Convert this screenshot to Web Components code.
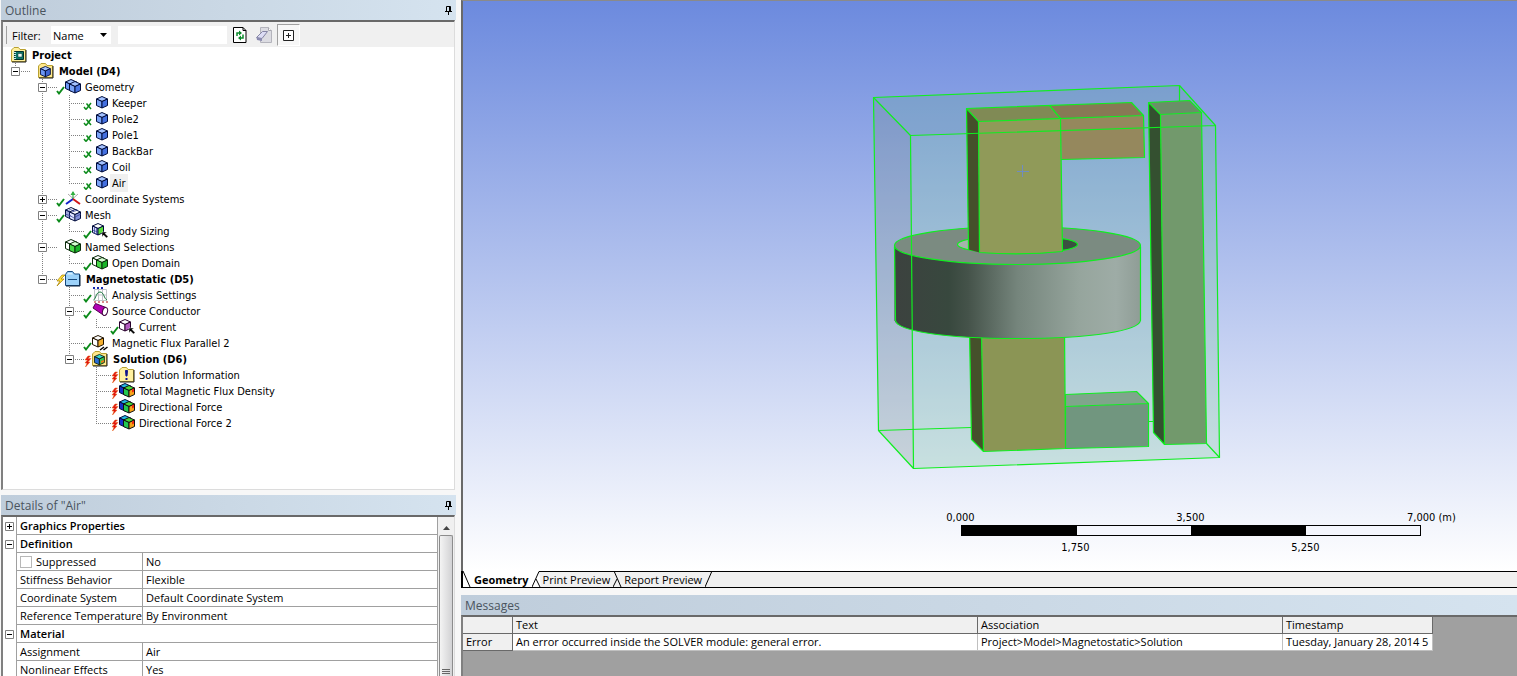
<!DOCTYPE html>
<html lang="en">
<head>
<meta charset="utf-8">
<title>Mechanical</title>
<style>
    :root {
        --tree-font: 11px/16px "DejaVu Sans Condensed", "DejaVu Sans", sans-serif;
        --ui-font: 11px/17px "Open Sans", "Noto Sans", sans-serif;
        --dark: #696969;
        --line: #a0a0a0;
        --face: #f0f0f0;
    }
    html, body {
        height: 100%;
        margin: 0;
    }
    body {
        background: #f7f7f7;
        color: #000;
        font: var(--ui-font);
        overflow: hidden;
    }
</style>
</head>
<body>
<mech-workspace>
    <dock-panel slot="outline" heading="Outline" pin>
        <outline-filter></outline-filter>
        <outline-tree>
            <tree-item root bold icon="project" label="Project">
                <tree-item bold icon="model" label="Model (D4)" toggle="minus" last>
                    <tree-item icon="geometry" label="Geometry" toggle="minus" status="check">
                        <tree-item icon="part" label="Keeper" status="hidden"></tree-item>
                        <tree-item icon="part" label="Pole2" status="hidden"></tree-item>
                        <tree-item icon="part" label="Pole1" status="hidden"></tree-item>
                        <tree-item icon="part" label="BackBar" status="hidden"></tree-item>
                        <tree-item icon="part" label="Coil" status="hidden"></tree-item>
                        <tree-item icon="part" label="Air" status="hidden" selected last></tree-item>
                    </tree-item>
                    <tree-item icon="axes" label="Coordinate Systems" toggle="plus" status="check"></tree-item>
                    <tree-item icon="mesh" label="Mesh" toggle="minus" status="check">
                        <tree-item icon="sizing" label="Body Sizing" status="check" last></tree-item>
                    </tree-item>
                    <tree-item icon="named" label="Named Selections" toggle="minus">
                        <tree-item icon="named" label="Open Domain" status="check" last></tree-item>
                    </tree-item>
                    <tree-item bold icon="analysis" label="Magnetostatic (D5)" toggle="minus" status="bolt" last>
                        <tree-item icon="settings" label="Analysis Settings" status="check"></tree-item>
                        <tree-item icon="conductor" label="Source Conductor" toggle="minus" status="check">
                            <tree-item icon="current" label="Current" status="check" last></tree-item>
                        </tree-item>
                        <tree-item icon="flux" label="Magnetic Flux Parallel 2" status="check"></tree-item>
                        <tree-item bold icon="solution" label="Solution (D6)" toggle="minus" status="failed" last>
                            <tree-item icon="info" label="Solution Information" status="failed"></tree-item>
                            <tree-item icon="result" label="Total Magnetic Flux Density" status="failed"></tree-item>
                            <tree-item icon="result" label="Directional Force" status="failed"></tree-item>
                            <tree-item icon="result" label="Directional Force 2" status="failed" last></tree-item>
                        </tree-item>
                    </tree-item>
                </tree-item>
            </tree-item>
        </outline-tree>
    </dock-panel>
    <dock-panel slot="details" heading='Details of "Air"' pin>
        <details-grid></details-grid>
    </dock-panel>
    <geometry-view slot="view">
        <scale-ruler></scale-ruler>
    </geometry-view>
    <view-tabs slot="tabs"></view-tabs>
    <dock-panel slot="messages" heading="Messages">
        <message-list></message-list>
    </dock-panel>
</mech-workspace>

<script>
const G = '#0b8a1a';

// isometric cube: top, left and right faces
const cube = (x, y, top, left, right, stroke = '#000c3c', scale = 1) => `
    <g transform="translate(${x} ${y}) scale(${scale})" stroke="${stroke}" stroke-width="1" stroke-linejoin="round">
        <path fill="${top}" d="M.5 3 6 .5 11.5 3 6 5.5z"/>
        <path fill="${left}" d="M.5 3 6 5.5V12L.5 9.5z"/>
        <path fill="${right}" d="M11.5 3 6 5.5V12l5.5-2.5z"/>
    </g>`;

const folder = (fill, edge) => `
    <path d="M.5 14.5V3L3 .5h4.5l1.5 2h5.5v12z" fill="${fill}" stroke="${edge}"/>
    <path d="M1 15h14V3" fill="none" stroke="#1a1a1a"/>`;

const ICONS = {
    project: folder('#ffef9c', '#b8a030') + `
        <path d="M3.5 4.5h9v8h-9z" fill="#0d7468" stroke="#00302c"/>
        <path d="M7 6.5h4V10H7z" fill="#e8f6f2" stroke="#00302c" stroke-width=".5"/>
        <path d="M2 5.5h3M2 7.5h3M2 9.5h3M2 11.5h3" stroke="#cfe8e4"/>`,
    model: folder('#ffe88c', '#b8a030') + cube(2, 3, '#a4c2ff', '#6b96f4', '#3f66d4', '#000c3c', .9),
    geometry: cube(0, 0, '#a4c2ff', '#6b96f4', '#4a76e4') + cube(4, 2, '#a4c2ff', '#7ba4f8', '#4a76e4'),
    part: cube(4, 1, '#a4c2ff', '#7ba4f8', '#4470e0'),
    axes: `
        <path d="M3 3l10 9M13 3 3 12" stroke="#aaa"/>
        <path d="M8 9V1" stroke="#10a020"/><path d="M5.5 4 8 0l2.5 4z" fill="#30b040"/>
        <path d="M8 8l-7 5" stroke="#1020c8" stroke-width="2"/><path d="M8 8l7 5" stroke="#d01818" stroke-width="2"/>`,
    mesh: cube(0, 0, '#fff', '#dfe4ff', '#c8d0ff') + cube(4, 2, '#fff', '#dfe4ff', '#b4c0ff') + `
        <path d="M2 2v8M4 3v8M0 7l6 2M12 7v6M14 6v6M10 10l6-3M4 8l5 3M7 5l6-2M4 2l5 2" stroke="#2c3a94" stroke-width=".7"/>`,
    sizing: cube(0, 0, '#fff', '#d8dcf8', '#5ade3c') + `
        <path d="M2.5 4v7M4.5 5v7M.5 7l5 2" stroke="#2c3a94" stroke-width=".7"/>
        <path d="M10 9h5l-2 1.5 3 3-1.5 1.5-3-3L10 14z" fill="#000" stroke="#fff" stroke-width=".4"/>`,
    named: cube(0, 0, '#fff', '#fff', '#e8f4e8', '#0a2a0a') + cube(4, 2, '#d4ffd0', '#48dc48', '#18b428', '#0a2a0a'),
    analysis: `
        <path d="M.5 14.5v-11l2-3h5l2 2.5h5v11.5z" fill="#9cd2fa" stroke="#16497e"/>
        <path d="M2 3.5 3 2h4l1 1.5z" fill="#d8f0ff"/><path d="M3 8.5h9" stroke="#16497e"/>
        <path d="M1 15h14V4" fill="none" stroke="#0a2038"/>`,
    settings: `
        <path d="M2.5 2.5h12v11h-12zM6.5 2.5v11M10.5 2.5v11M2.5 8h12" fill="none" stroke="#c0c4c8"/>
        <path d="M1 1h2M5 1h2M9 1h2" stroke="#1428b0" stroke-width="2"/>
        <path d="M2 15h2M6 15h2M10 15h2M14 15h2" stroke="#b01818"/>
        <path d="M1.5 13C4 12 4 5 8 5s4 7 7 8" fill="none" stroke="#18783c"/>`,
    conductor: `
        <path d="M1 5 3.5.5 14 4.5 12 12.5z" fill="#b400b4" stroke="#500050"/>
        <ellipse cx="13" cy="8.5" rx="2.5" ry="4" fill="#fff" stroke="#400040" transform="rotate(15 13 8.5)"/>`,
    current: cube(0, 0, '#fff', '#fff', '#b45cc0', '#28002c') + `
        <path d="M10 9h5l-2 1.5 3 3-1.5 1.5-3-3L10 14z" fill="#000" stroke="#fff" stroke-width=".4"/>`,
    flux: cube(0, 0, '#fff', '#fff', '#f4b030', '#221400') + `
        <path d="M8 15l4-3M11.5 15l4-3" stroke="#000" stroke-width="1.5"/>`,
    solution: folder('#ffe88c', '#b8a030') + cube(2, 3, '#38d8d0', '#2a6ed8', '#38c850', '#102010', .9) + `
        <path d="M9 10l3-1v2l-3 1z" fill="#f07818"/>`,
    info: folder('#fff0a0', '#b8a030') + `
        <path d="M6.5 3.5h2L8 9H7z" fill="#10148c" stroke="#10148c"/><path d="M7.5 11v2" stroke="#10148c" stroke-width="2"/>`,
    result: cube(0, 0, '#22b8e0', '#1530c8', '#18b8b0') + cube(4, 2, '#48d838', '#22c850', '#f8a418', '#101010') + `
        <path d="M13 6.5l2-1v3l-2 1z" fill="#f02810"/>`
};

const STATUS = {
    check: `<path d="M1 12l2 2.5L8 8" fill="none" stroke="${G}" stroke-width="2"/>`,
    hidden: `<path d="M1 12l2 2.5M3 14.5 8 8M3.5 8.5 8 14" fill="none" stroke="${G}" stroke-width="1.5"/>`,
    bolt: `<path d="M6 4 1 10h3l-3 5 7-7H5l4-4z" fill="#ffe23c" stroke="#a88000" stroke-width=".7"/>`,
    failed: `<path d="M5 5 2 9h2.5L2 12h2l-1.5 4L7 11H5l3-3.5H5L7.5 5z" fill="#e01010" stroke="#e86010" stroke-width=".5"/>`
};

const PIN = `<svg width="7" height="9" viewBox="0 0 7 9"><path d="M1.5 5V.5h4V5M0 5.5h7M3.5 6v3M4.5 1v4" fill="none" stroke="#000"/></svg>`;

class MechWorkspace extends HTMLElement {
    constructor() {
        super();
        this.attachShadow({ mode: "open" });
    }

    static get styles() {
        return /* css */`
            :host {
                display: grid;
                grid-template-columns: 456px minmax(0, 1fr);
                column-gap: 5px;
                height: 100vh;
            }

            .side {
                display: grid;
                grid-template-rows: minmax(0, 1fr) 181px;
                row-gap: 5px;
                min-height: 0;
                padding-left: 1px;
            }

            .main {
                display: grid;
                grid-template-rows: minmax(0, 1fr) auto 81px;
                min-height: 0;
            }

            ::slotted([slot="tabs"]) {
                margin-bottom: 7px;
            }
        `;
    }

    connectedCallback() {
        this.render();
    }

    render() {
        this.shadowRoot.innerHTML = /* html */`
        <style>${MechWorkspace.styles}</style>
        <div class="side">
            <slot name="outline"></slot>
            <slot name="details"></slot>
        </div>
        <div class="main">
            <slot name="view"></slot>
            <slot name="tabs"></slot>
            <slot name="messages"></slot>
        </div>`;
    }
}

class DockPanel extends HTMLElement {
    constructor() {
        super();
        this.attachShadow({ mode: "open" });
    }

    static get styles() {
        return /* css */`
            :host {
                display: flex;
                flex-direction: column;
                min-height: 0;
                overflow: hidden;
            }

            header {
                display: flex;
                align-items: center;
                justify-content: space-between;
                flex: none;
                height: 20px;
                padding: 0 4px;
                background: linear-gradient(90deg, #bfcddb, #d5e3ef);
                color: #4a545e;
                font-size: 12px;
            }

            h2 {
                margin: 0;
                font: inherit;
            }

            button {
                display: flex;
                padding: 0;
                border: 0;
                background: none;
            }

            .body {
                display: flex;
                flex-direction: column;
                flex: 1;
                min-height: 0;
                overflow: hidden;
                border-top: 2px solid var(--dark);
                border-left: 2px solid #808080;
                background: #fff;
            }

            :host([pin]) .body {
                margin-right: 1px;
                border-right: 1px solid #dcdcdc;
            }

            :host([slot="outline"]) .body {
                border-bottom: 1px solid #dcdcdc;
            }

            :host([slot="messages"]) .body {
                background: #a0a0a0;
            }
        `;
    }

    connectedCallback() {
        this.render();
    }

    render() {
        const pin = this.hasAttribute('pin') ? `<button aria-label="Auto hide">${PIN}</button>` : '';
        this.shadowRoot.innerHTML = /* html */`
        <style>${DockPanel.styles}</style>
        <header><h2></h2>${pin}</header>
        <div class="body"><slot></slot></div>`;
        this.shadowRoot.querySelector('h2').textContent = this.getAttribute('heading');
    }
}

class OutlineFilter extends HTMLElement {
    constructor() {
        super();
        this.attachShadow({ mode: "open" });
    }

    static get styles() {
        return /* css */`
            :host {
                display: flex;
                align-items: center;
                flex: none;
                box-sizing: border-box;
                height: 25px;
                padding: 1px 0 0 2px;
                background: var(--face);
            }

            .grip {
                width: 1px;
                height: 18px;
                margin-right: 5px;
                border-right: 1px solid var(--line);
            }

            label {
                width: 39px;
            }

            label, select, input {
                font: var(--ui-font);
            }

            .combo {
                display: grid;
                align-items: center;
                width: 60px;
                margin-right: 7px;
            }

            .combo > * {
                grid-area: 1 / 1;
            }

            .combo svg {
                justify-self: end;
                margin-right: 4px;
                pointer-events: none;
            }

            select, input {
                box-sizing: border-box;
                width: 100%;
                height: 18px;
                padding: 0 2px;
                border: 0;
                border-radius: 0;
                background: #fff;
                color: #000;
                appearance: none;
            }

            input {
                width: 109px;
                margin-right: 5px;
            }

            button {
                display: flex;
                align-items: center;
                justify-content: center;
                width: 16px;
                height: 18px;
                margin-right: 8px;
                padding: 0;
                border: 0;
                background: none;
            }

            button.pressed {
                box-sizing: border-box;
                width: 23px;
                height: 22px;
                margin: 0 0 0 -3px;
                border: 1px solid;
                border-color: var(--line) #fff #fff var(--line);
                background: #f7f7f7;
            }
        `;
    }

    connectedCallback() {
        this.render();
    }

    render() {
        this.shadowRoot.innerHTML = /* html */`
        <style>${OutlineFilter.styles}</style>
        <span class="grip"></span>
        <label for="by">Filter:</label>
        <div class="combo">
            <select id="by"><option>Name</option></select>
            <svg width="7" height="4" viewBox="0 0 7 4"><path d="M0 0h7L3.5 4z"/></svg>
        </div>
        <input type="text" aria-label="Filter text">
        <button aria-label="Refresh">
            <svg width="14" height="16" viewBox="0 0 14 16">
                <path d="M.5.5H10l3 3v12H.5z" fill="#fff" stroke="#000"/>
                <path d="M10 .5v3h3" fill="none" stroke="#000"/>
                <path d="M4 9V6h3M10 7.5V11H7" fill="none" stroke="#0a8a2a" stroke-width="1.5"/>
                <path d="M6 3.5 9 6 6 8.5zM8 8.5 5 11l3 2.5z" fill="#0a8a2a"/>
            </svg>
        </button>
        <button aria-label="Clear">
            <svg width="16" height="16" viewBox="0 0 16 16">
                <path d="M4.5.5h8l3 3v12h-11z" fill="#dcdce2" stroke="#b4b4bc"/>
                <path d="M12.5.5v3h3" fill="#fff" stroke="#a8a8b0"/>
                <path d="M.5 10.5l6-6h5l-5.5 7z" fill="#dcdcf4" stroke="#8484a4"/>
                <path d="M.5 10.5 6 11.5V14L1 13z" fill="#8a8ab0"/>
            </svg>
        </button>
        <button class="pressed" aria-label="Expand all">
            <svg width="11" height="11" viewBox="0 0 11 11"><path d="M.5.5h10v10H.5zM3 5.5h5M5.5 3v5" fill="#fff" stroke="#222"/></svg>
        </button>`;
    }
}

class OutlineTree extends HTMLElement {
    constructor() {
        super();
        this.attachShadow({ mode: "open" });
    }

    connectedCallback() {
        this.shadowRoot.innerHTML = /* html */`
        <style>
            :host {
                display: block;
                flex: 1;
                min-height: 0;
                padding-left: 8px;
                font: var(--tree-font);
            }
        </style>
        <slot></slot>`;
    }
}

class TreeItem extends HTMLElement {
    constructor() {
        super();
        this.attachShadow({ mode: "open" });
    }

    static get styles() {
        return /* css */`
            /* vertical guide runs down the host, behind the toggle */
            :host {
                display: block;
                background: repeating-linear-gradient(#808080 0 1px, transparent 1px 2px) 4px 0 / 1px 100% no-repeat;
                font-weight: normal;
            }

            :host([last]) {
                background-size: 1px 9px;
            }

            :host([root]) {
                background: none;
            }

            .row {
                display: flex;
                align-items: center;
                height: 16px;
            }

            .guide {
                display: flex;
                align-items: center;
                justify-content: space-between;
                width: 27px;
                height: 16px;
                background: repeating-linear-gradient(90deg, #808080 0 1px, transparent 1px 2px) 4px 8px / 15px 1px no-repeat;
            }

            .status {
                margin-left: auto;
            }

            svg {
                display: block;
                flex: none;
                overflow: visible;
            }

            .label {
                margin-left: 2px;
                padding: 2px 2px 0;
                line-height: 16px;
                white-space: nowrap;
            }

            :host([bold]) .label {
                padding-left: 3px;
                font-weight: bold;
            }

            :host([selected]) .label {
                background: var(--face);
            }

            .children {
                margin-left: 27px;
            }

            :host([root]) .children {
                margin-left: 0;
            }
        `;
    }

    connectedCallback() {
        this.render();
    }

    toggle() {
        const kind = this.getAttribute('toggle');
        if (!kind) return '';
        const bar = kind === 'plus' ? 'M2 4.5h5M4.5 2v5' : 'M2 4.5h5';
        return `<svg width="9" height="9" viewBox="0 0 9 9">
            <path d="M.5.5h8v8h-8z" fill="#fff" stroke="#808080"/><path d="${bar}" stroke="#000"/></svg>`;
    }

    status() {
        const kind = this.getAttribute('status');
        if (!kind) return '';
        return `<svg class="status" width="9" height="16" viewBox="0 0 9 16">${STATUS[kind]}</svg>`;
    }

    render() {
        const guide = this.hasAttribute('root') ? '' : `<span class="guide">${this.toggle()}${this.status()}</span>`;
        this.shadowRoot.innerHTML = /* html */`
        <style>${TreeItem.styles}</style>
        <div class="row">
            ${guide}
            <svg width="16" height="16" viewBox="0 0 16 16">${ICONS[this.getAttribute('icon')]}</svg>
            <span class="label">${this.getAttribute('label')}</span>
        </div>
        <div class="children"><slot></slot></div>`;
    }
}

class DetailsGrid extends HTMLElement {
    constructor() {
        super();
        this.attachShadow({ mode: "open" });
        this.groups = [
            ['plus', 'Graphics Properties', []],
            ['minus', 'Definition', [
                ['Suppressed', 'No', true],
                ['Stiffness Behavior', 'Flexible'],
                ['Coordinate System', 'Default Coordinate System'],
                ['Reference Temperature', 'By Environment']
            ]],
            ['minus', 'Material', [
                ['Assignment', 'Air'],
                ['Nonlinear Effects', 'Yes']
            ]]
        ];
    }

    static get styles() {
        return /* css */`
            :host {
                display: flex;
                flex: 1;
                min-height: 0;
            }

            table {
                flex: 1;
                align-self: flex-start;
                table-layout: fixed;
                border-collapse: separate;
                border-spacing: 0;
                width: 100%;
            }

            .mark { width: 14px; }
            .name { width: 126px; }

            tr {
                height: 18px;
            }

            th, td {
                box-sizing: border-box;
                height: 18px;
                padding: 0 0 0 3px;
                border-right: 1px solid var(--line);
                border-bottom: 1px solid var(--line);
                font: var(--ui-font);
                text-align: left;
                white-space: nowrap;
            }

            th[colspan] {
                font-weight: 600;
            }

            td:first-child {
                padding: 0 0 0 2px;
                border-bottom: 0;
            }

            td svg {
                display: block;
            }

            label {
                display: flex;
                align-items: center;
            }

            input {
                box-sizing: border-box;
                width: 12px;
                height: 12px;
                margin: 0 4px 0 0;
                border: 1px solid #b8b8b8;
                background: #fff;
                appearance: none;
            }

            .scroll {
                display: flex;
                flex-direction: column;
                align-items: center;
                width: 16px;
                background: var(--face);
            }

            .scroll button {
                width: 16px;
                height: 18px;
                padding: 0;
                border: 0;
                background: none;
                line-height: 8px;
            }

            .thumb {
                display: flex;
                align-items: flex-end;
                justify-content: center;
                box-sizing: border-box;
                flex: 1;
                width: 14px;
                padding-bottom: 1px;
                border: 1px solid #8c8c8c;
                border-bottom: 0;
                border-radius: 2px 2px 0 0;
                background: linear-gradient(90deg, #f4f4f4, #d2d2d4);
            }
        `;
    }

    connectedCallback() {
        this.render();
    }

    mark(kind) {
        const bar = kind === 'plus' ? 'M2 4.5h5M4.5 2v5' : 'M2 4.5h5';
        return `<svg width="9" height="9" viewBox="0 0 9 9">
            <path d="M.5.5h8v8h-8z" fill="#fff" stroke="#808080"/><path d="${bar}" stroke="#000"/></svg>`;
    }

    render() {
        const rows = this.groups.map(([kind, title, items]) => `
            <tr><td>${this.mark(kind)}</td><th colspan="2">${title}</th></tr>
            ${items.map(([name, value, box]) => `
            <tr><td></td><th scope="row">${box ? `<label><input type="checkbox">${name}</label>` : name}</th><td>${value}</td></tr>`).join('')}
        `).join('');
        this.shadowRoot.innerHTML = /* html */`
        <style>${DetailsGrid.styles}</style>
        <table>
            <colgroup><col class="mark"><col class="name"><col></colgroup>
            <tbody>${rows}</tbody>
        </table>
        <div class="scroll">
            <button aria-label="Scroll up"><svg width="7" height="4" viewBox="0 0 7 4"><path d="M0 4h7L3.5 0z" fill="#444"/></svg></button>
            <div class="thumb"><svg width="8" height="6" viewBox="0 0 8 6"><path d="M0 .5h8M0 2.5h8M0 4.5h8" stroke="#666"/></svg></div>
        </div>`;
    }
}

class GeometryView extends HTMLElement {
    constructor() {
        super();
        this.attachShadow({ mode: "open" });
    }

    static get styles() {
        return /* css */`
            :host {
                display: grid;
                grid-template: minmax(0, 1fr) / minmax(0, 1fr);
                min-height: 0;
                border-top: 1px solid #8a8a8a;
                border-left: 2px solid var(--dark);
                background: linear-gradient(#6c8ade, #fff);
            }

            svg {
                grid-area: 1 / 1;
                width: 100%;
                height: 100%;
                min-height: 0;
            }

            .edges {
                fill: none;
                stroke: #10ee20;
                stroke-width: 1.2;
                stroke-linejoin: round;
            }

            ::slotted(*) {
                grid-area: 1 / 1;
                place-self: end;
                margin: 0 39px 16px 0;
            }
        `;
    }

    connectedCallback() {
        this.render();
    }

    render() {
        this.shadowRoot.innerHTML = /* html */`
        <style>${GeometryView.styles}</style>
        <svg viewBox="463 1 1054 570" role="img" aria-label="Electromagnet model">
            <defs>
                <linearGradient id="coil">
                    <stop offset="0" stop-color="#3c423f"/>
                    <stop offset=".22" stop-color="#38483e"/>
                    <stop offset=".3" stop-color="#45534a"/>
                    <stop offset=".5" stop-color="#75857c"/>
                    <stop offset=".75" stop-color="#96a59d"/>
                    <stop offset=".9" stop-color="#9eaca6"/>
                    <stop offset="1" stop-color="#8f9d96"/>
                </linearGradient>
                <clipPath id="bore"><ellipse cx="1017" cy="244" rx="60" ry="9"/></clipPath>
            </defs>
            <g transform="translate(.5 .5)">
            <!-- air enclosure -->
            <path d="M873 97 1179 85l36 40-305 10z" fill="#6ea5a5" fill-opacity=".35"/>
            <path d="M873 97l37 38 3 333-35-38z" fill="#64826e" fill-opacity=".22"/>
            <path d="M910 135l305-10 4 332-306 11z" fill="#73c393" fill-opacity=".25"/>
            <path class="edges" d="M1179 85v18M1148 421l5 0M1206 443l13 14M878 430l93-3"/>
            <!-- lower bar -->
            <path d="M1065 394l71-3 12 12-83 3z" fill="#80a58c"/>
            <path d="M1065 406l83-3v43l-83 2z" fill="#71967f"/>
            <path class="edges" d="M1065 394l71-3 12 12v43l-83 2zM1065 406l83-3"/>
            <!-- keeper -->
            <path d="M1148 102l12 12 4 330-11-12z" fill="#345030"/>
            <path d="M1148 102l41-2 12 12-41 2z" fill="#6a8f68"/>
            <path d="M1160 114l41-2 5 331-42 1z" fill="#72996c"/>
            <path class="edges" d="M1148 102l41-2 12 12 5 331-42 1-11-12zM1148 102l12 12 41-2M1160 114l4 330"/>
            <!-- lower pole -->
            <path d="M969 330l12 0 2 121-12-12z" fill="#45502b"/>
            <path d="M981 330h83l1 118-82 3z" fill="#8b9555"/>
            <path class="edges" d="M969 330l2 109 12 12 82-3-1-118M981 330l2 121"/>
            <!-- coil -->
            <path d="M894 246V320C897 330 940 338 1017 338S1138 330 1140 320V246z" fill="url(#coil)"/>
            <ellipse cx="1017" cy="245" rx="123" ry="19" fill="#7b8b81"/>
            <g clip-path="url(#bore)">
                <path d="M956 234h61v20h-61z" fill="#a5b4ac"/>
                <path d="M1017 234h61v20h-61z" fill="#3a5040"/>
            </g>
            <g class="edges">
                <path d="M895 320C897 330 940 338 1017 338S1138 330 1140 320M894 246l1 74M1140 246v74"/>
                <ellipse cx="1017" cy="245" rx="123" ry="19"/>
                <ellipse cx="1017" cy="244" rx="60" ry="9"/>
            </g>
            <!-- upper pole and back bar -->
            <path d="M966 108l12 13 1 131-11-3z" fill="#45502b"/>
            <path d="M966 108l83-3 11 13-82 3z" fill="#808a55"/>
            <path d="M978 121l82-3 2 133q-40 4-83 1z" fill="#909a59"/>
            <path d="M1049 105l82-3 12 13-83 3z" fill="#887955"/>
            <path d="M1060 118l83-3 1 42-83 2z" fill="#95885d"/>
            <path class="edges" d="M968 249l-2-141 165-6 12 13 1 42-83 2M966 108l12 13 165-6M1049 105l11 13 2 133q-40 4-83 1l-1-131"/>
            <!-- enclosure edges -->
            <path class="edges" d="M873 97 1179 85l36 40-305 10zM873 97l5 333 35 38 306-11-4-332M910 135l3 333"/>
            </g>
            <path d="M1017 171.5h12M1022.5 165v12" stroke="#6f8cc0"/>
        </svg>
        <slot></slot>`;
    }
}

class ScaleRuler extends HTMLElement {
    constructor() {
        super();
        this.attachShadow({ mode: "open" });
    }

    static get styles() {
        return /* css */`
            :host {
                display: grid;
                grid-template-columns: repeat(5, 115px);
                font: 11px/15px "DejaVu Sans Condensed", "DejaVu Sans", sans-serif;
                text-align: center;
                white-space: nowrap;
            }

            span:nth-of-type(3) { grid-column: 5; text-align: left; padding-left: 44px; }
            span:nth-of-type(2) { grid-column: 3; }
            span:nth-of-type(4) { grid-column: 2; }
            span:nth-of-type(5) { grid-column: 4; }

            .bar {
                display: grid;
                grid-template-columns: repeat(4, 1fr);
                grid-column: 1 / -1;
                height: 9px;
                margin: 0 57px 4px 58px;
                border: 1px solid #000;
                background: #f4f6fd;
            }

            i:nth-child(odd) {
                background: #000;
            }
        `;
    }

    connectedCallback() {
        this.render();
    }

    render() {
        this.shadowRoot.innerHTML = /* html */`
        <style>${ScaleRuler.styles}</style>
        <span>0,000</span><span>3,500</span><span>7,000 (m)</span>
        <div class="bar"><i></i><i></i><i></i><i></i></div>
        <span>1,750</span><span>5,250</span>`;
    }
}

class ViewTabs extends HTMLElement {
    constructor() {
        super();
        this.attachShadow({ mode: "open" });
    }

    static get styles() {
        return /* css */`
            :host {
                display: flex;
                height: 16px;
                border-left: 2px solid #000;
                border-bottom: 1px solid #000;
                background: #fff;
            }

            svg {
                flex: none;
                display: block;
                width: 9px;
                height: 16px;
            }

            button {
                padding: 1px 3px 0 2px;
                border: 0;
                background: var(--face);
                color: #000;
                font: var(--ui-font);
                line-height: 15px;
            }

            button[aria-selected="true"] {
                background: #fff;
                font-weight: bold;
            }

            button[aria-selected="false"], .fill {
                box-shadow: inset 0 1px #000;
            }

            .fill {
                flex: 1;
                background: var(--face);
            }
        `;
    }

    connectedCallback() {
        this.render();
    }

    render() {
        this.shadowRoot.innerHTML = /* html */`
        <style>${ViewTabs.styles}</style>
        <svg viewBox="0 0 9 16"><path d="M0 0l7 16" stroke="#000"/></svg>
        <button role="tab" aria-selected="true">Geometry</button>
        <svg viewBox="0 0 9 16"><path d="M7 0h2v16z" fill="#f0f0f0"/><path d="M0 16 7 .5h2M4 8l4 8" fill="none" stroke="#000"/></svg>
        <button role="tab" aria-selected="false">Print Preview</button>
        <svg viewBox="0 0 9 16"><path d="M0 0h9v16H0z" fill="#f0f0f0"/><path d="M0 .5h9M1 0l7 16M0 16l4-8" stroke="#000"/></svg>
        <button role="tab" aria-selected="false">Report Preview</button>
        <svg viewBox="0 0 9 16"><path d="M0 0h9v16H0z" fill="#f0f0f0"/><path d="M0 .5h9M0 16 7 0" stroke="#000"/></svg>
        <span class="fill"></span>`;
    }
}

class MessageList extends HTMLElement {
    constructor() {
        super();
        this.attachShadow({ mode: "open" });
    }

    static get styles() {
        return /* css */`
            :host {
                display: block;
            }

            table {
                table-layout: fixed;
                width: 970px;
                border-spacing: 0;
            }

            .kind { width: 50px; }
            .text { width: 465px; }
            .link { width: 305px; }

            th, td {
                box-sizing: border-box;
                height: 17px;
                padding: 0 0 0 3px;
                overflow: hidden;
                border-right: 1px solid #c0c0c0;
                border-bottom: 1px solid #c0c0c0;
                background: #fff;
                font: var(--ui-font);
                line-height: 16px;
                text-align: left;
                white-space: nowrap;
            }

            th {
                border-color: var(--dark);
                background: var(--face);
            }
        `;
    }

    connectedCallback() {
        this.render();
    }

    render() {
        this.shadowRoot.innerHTML = /* html */`
        <style>${MessageList.styles}</style>
        <table>
            <colgroup><col class="kind"><col class="text"><col class="link"><col></colgroup>
            <thead>
                <tr><th></th><th>Text</th><th>Association</th><th>Timestamp</th></tr>
            </thead>
            <tbody>
                <tr>
                    <th scope="row">Error</th>
                    <td>An error occurred inside the SOLVER module: general error.</td>
                    <td>Project&gt;Model&gt;Magnetostatic&gt;Solution</td>
                    <td>Tuesday, January 28, 2014 5</td>
                </tr>
            </tbody>
        </table>`;
    }
}

customElements.define("mech-workspace", MechWorkspace);
customElements.define("dock-panel", DockPanel);
customElements.define("outline-filter", OutlineFilter);
customElements.define("outline-tree", OutlineTree);
customElements.define("tree-item", TreeItem);
customElements.define("details-grid", DetailsGrid);
customElements.define("geometry-view", GeometryView);
customElements.define("scale-ruler", ScaleRuler);
customElements.define("view-tabs", ViewTabs);
customElements.define("message-list", MessageList);
</script>
</body>
</html>
